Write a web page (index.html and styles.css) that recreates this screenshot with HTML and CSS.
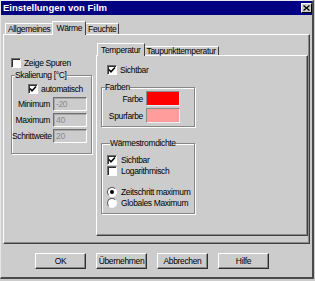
FILE: index.html
```html
<!DOCTYPE html>
<html lang="de">
<head>
  <meta charset="UTF-8" />
  <title>Einstellungen von Film</title>
  <link rel="stylesheet" href="styles.css">
</head>
<body>
  <div class="window">
    <div class="titlebar">
      <span class="title">Einstellungen von Film</span>
      <span class="close">
        <svg width="7" height="6" viewBox="0 0 7 6"><path d="M0.5 0.5L6.5 5.5M6.5 0.5L0.5 5.5" stroke="#000" stroke-width="1.3"/></svg>
      </span>
    </div>

    <div class="tabs outer-tabs">
      <div class="tab">Allgemeines</div>
      <div class="tab active">Wärme</div>
      <div class="tab">Feuchte</div>
    </div>

    <div class="panel outer-panel">
      <div class="left-col">
        <label class="check spuren"><span class="box"></span>Zeige Spuren</label>

        <fieldset class="group scale">
          <legend>Skalierung [°C]</legend>
          <label class="check auto">
            <span class="box"><svg width="8" height="8" viewBox="0 0 8 8"><path d="M1 3.5L3 5.8L7 1.5" fill="none" stroke="#000" stroke-width="1.5"/></svg></span>automatisch
          </label>
          <div class="field"><span class="field-label">Minimum</span><input class="entry" value="-20" disabled></div>
          <div class="field"><span class="field-label">Maximum</span><input class="entry" value="40" disabled></div>
          <div class="field"><span class="field-label">Schrittweite</span><input class="entry" value="20" disabled></div>
        </fieldset>
      </div>

      <div class="inner">
        <div class="tabs inner-tabs">
          <div class="tab active">Temperatur</div>
          <div class="tab">Taupunkttemperatur</div>
        </div>
        <div class="panel inner-panel">
          <label class="check visible">
            <span class="box"><svg width="8" height="8" viewBox="0 0 8 8"><path d="M1 3.5L3 5.8L7 1.5" fill="none" stroke="#000" stroke-width="1.5"/></svg></span>Sichtbar
          </label>

          <fieldset class="group colors">
            <legend>Farben</legend>
            <div class="color-row"><span class="field-label">Farbe</span><span class="swatch red"></span></div>
            <div class="color-row"><span class="field-label">Spurfarbe</span><span class="swatch pink"></span></div>
          </fieldset>

          <fieldset class="group flux">
            <legend>Wärmestromdichte</legend>
            <label class="check">
              <span class="box"><svg width="8" height="8" viewBox="0 0 8 8"><path d="M1 3.5L3 5.8L7 1.5" fill="none" stroke="#000" stroke-width="1.5"/></svg></span>Sichtbar
            </label>
            <label class="check"><span class="box"></span>Logarithmisch</label>
            <label class="check radio-row"><span class="radio checked"></span>Zeitschritt maximum</label>
            <label class="check"><span class="radio"></span>Globales Maximum</label>
          </fieldset>
        </div>
      </div>
    </div>

    <div class="buttons">
      <button>OK</button>
      <button>Übernehmen</button>
      <button>Abbrechen</button>
      <button>Hilfe</button>
    </div>
  </div>
</body>
</html>
```

FILE: styles.css
```css
* {
  box-sizing: border-box;
}

body {
  margin: 0;
  background: #cccccc;
  color: #000;
  font-family: "Liberation Sans", Arial, sans-serif;
  font-size: 8.5px;
  line-height: 10px;
  letter-spacing: -0.35px;
}

.window {
  width: 314px;
  height: 279px;
  border-top: 1px solid #e6e6e6;
  border-left: 1px solid #e6e6e6;
  border-right: 2px solid #4a4a4a;
  border-bottom: 2px solid #4a4a4a;
  display: flex;
  flex-direction: column;
}

/* title bar */
.titlebar {
  height: 14px;
  background: #000080;
  color: #fff;
  font-size: 9.5px;
  font-weight: bold;
  letter-spacing: 0;
  display: flex;
  align-items: center;
  justify-content: space-between;
  padding-left: 2px;
}

.close {
  width: 11px;
  height: 10px;
  background: #cccccc;
  border: 1px solid;
  border-color: #fff #000 #000 #fff;
  display: flex;
  align-items: center;
  justify-content: center;
}

/* tabs */
.tabs {
  display: flex;
  align-items: flex-end;
}

.tab {
  border: 1px solid;
  border-bottom: none;
  border-color: #fff #404040 transparent #fff;
  padding: 0 2px;
  white-space: nowrap;
}

.tab.active {
  position: relative;
  z-index: 1;
  background: #cccccc;
  margin: 0 -1px -1px;
  padding: 0 3px;
}

.outer-tabs {
  height: 13px;
  margin: 6px 0 0 4px;
}

.outer-tabs .tab {
  height: 11px;
}

.outer-tabs .tab.active {
  height: 14px;
  padding-top: 1px;
}

.panel {
  border: 1px solid;
  border-color: #fff #404040 #404040 #fff;
  box-shadow: inset -1px -1px 0 #8a8a8a;
}

.outer-panel {
  width: 307px;
  height: 210px;
  margin-left: 2px;
  padding: 8px 0 0 6px;
  display: flex;
  align-items: flex-start;
}

/* left column */
.left-col {
  width: 82px;
  margin-top: 14px;
}

.check {
  display: flex;
  align-items: center;
  gap: 3px;
  height: 11px;
  white-space: nowrap;
}

.box {
  width: 10px;
  height: 10px;
  flex: none;
  background: #fff;
  border: 1px solid;
  border-color: #6e6e6e #fff #fff #6e6e6e;
  box-shadow: inset 1px 1px 0 #2e2e2e;
  display: flex;
  align-items: center;
  justify-content: center;
}

.radio {
  width: 10px;
  height: 10px;
  flex: none;
  border-radius: 50%;
  background: #fff;
  border: 1px solid;
  border-color: #555 #fff #fff #555;
  display: flex;
  align-items: center;
  justify-content: center;
}

.radio.checked::after {
  content: "";
  width: 4px;
  height: 4px;
  border-radius: 50%;
  background: #000;
}

.spuren {
  margin-left: 1px;
}

.group {
  margin: 0;
  padding: 0;
  min-width: 0;
  border: 1px solid #868686;
  box-shadow: inset 1px 1px 0 #fff, 1px 1px 0 #fff;
}

.group legend {
  padding: 0;
  margin-left: 3px;
  line-height: 8px;
  background: #cccccc;
}

.scale {
  width: 81px;
  margin: 3px 0 0 1px;
  padding: 5px 0 10px;
}

.auto {
  margin-left: 16px;
  margin-bottom: 3px;
  height: 10px;
}

.field {
  display: flex;
  align-items: center;
  height: 14px;
  margin-bottom: 2px;
}

.field:last-child {
  margin-bottom: 0;
}

.field-label {
  width: 38px;
  margin-right: 3px;
  text-align: right;
  white-space: nowrap;
}

.entry {
  width: 34px;
  height: 14px;
  padding: 0 2px;
  font: inherit;
  letter-spacing: inherit;
  color: #8a8a8a;
  background: #cccccc;
  border: 1px solid;
  border-color: #6e6e6e #fff #fff #6e6e6e;
  box-shadow: inset 1px 1px 0 #a8a8a8;
  outline: none;
}

/* inner tab control */
.inner {
  width: 212px;
  margin-left: 4px;
}

.inner-tabs {
  height: 12px;
  padding-left: 2px;
}

.inner-tabs .tab {
  height: 9px;
  line-height: 9px;
}

.inner-tabs .tab.active {
  height: 13px;
  padding-top: 2px;
}

.inner-panel {
  height: 181px;
  padding: 8px 0 0 4px;
}

.visible {
  margin-left: 6px;
}

.colors {
  width: 94px;
  margin-top: 8px;
  padding: 0 0 3px;
}

.color-row {
  display: flex;
  align-items: center;
  height: 15px;
  margin-bottom: 2px;
}

.color-row:last-child {
  margin-bottom: 0;
}

.colors .field-label {
  width: 41px;
}

.swatch {
  width: 34px;
  height: 15px;
  border: 1px solid;
  border-color: #8a8a8a #eee #eee #8a8a8a;
}

.swatch.red {
  background: #ff0000;
}

.swatch.pink {
  background: #ff9c9c;
}

.flux {
  width: 94px;
  margin-top: 12px;
  padding: 7px 0 5px 5px;
}

.flux .check {
  gap: 4px;
}

.radio-row {
  margin-top: 10px;
}

/* bottom buttons */
.buttons {
  display: flex;
  gap: 10px;
  margin: 9px 0 0 34px;
}

button {
  width: 51px;
  height: 16px;
  padding: 0;
  font: inherit;
  letter-spacing: inherit;
  color: #000;
  background: #cccccc;
  border: 1px solid;
  border-color: #fff #2e2e2e #2e2e2e #fff;
  box-shadow: inset -1px -1px 0 #8a8a8a;
}
```
